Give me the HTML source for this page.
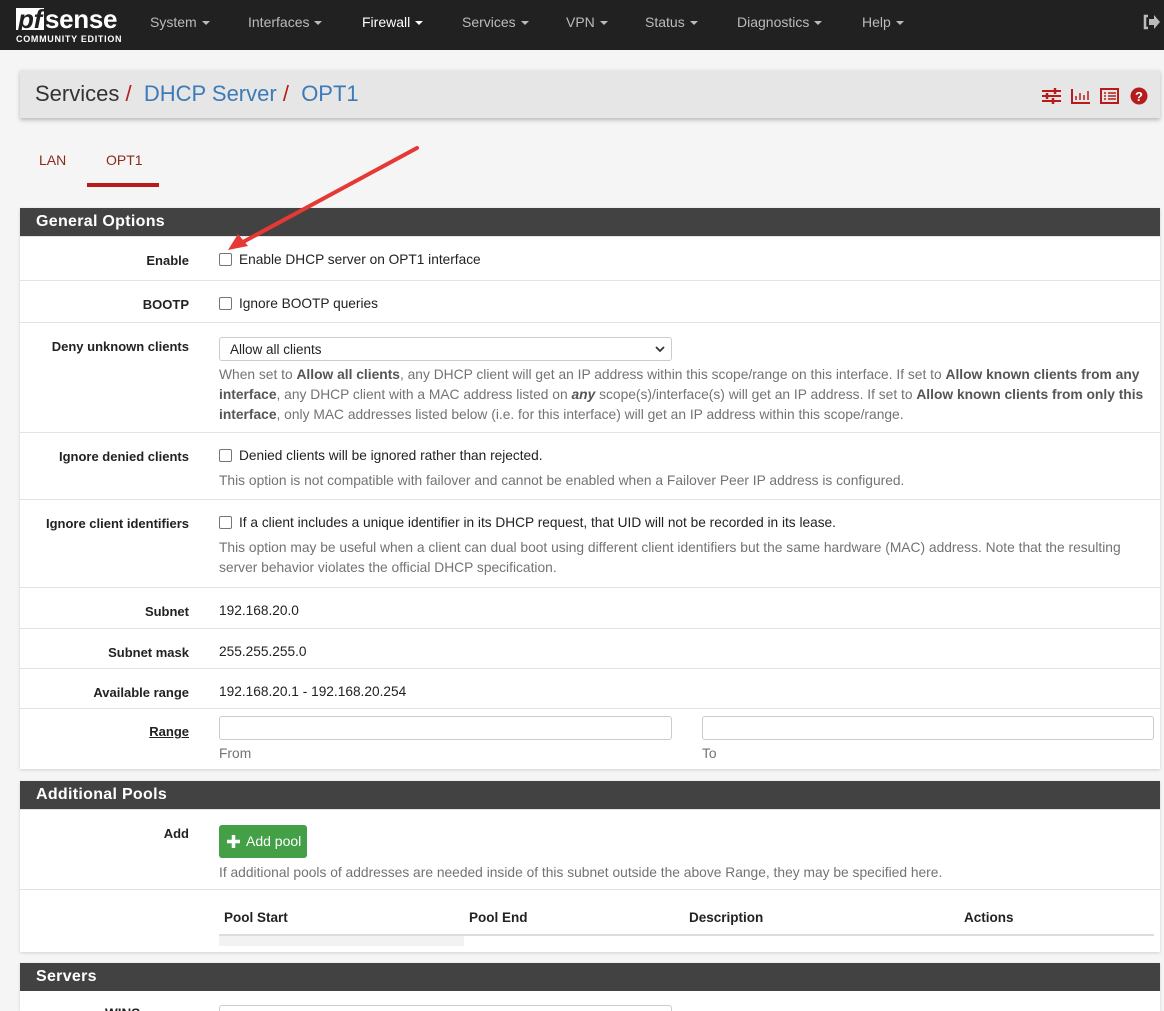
<!DOCTYPE html>
<html style="overflow:hidden;height:1011px"><head><meta charset="utf-8"><style>
*{box-sizing:border-box;margin:0;padding:0}
body{width:1164px;height:1011px;overflow:hidden;background:#f5f5f5;font-family:"Liberation Sans",sans-serif;font-size:13.5px;color:#222;position:relative}
.nav{position:absolute;left:0;top:0;width:1164px;height:50px;background:#212121}
.nav .item{position:absolute;top:14px;color:#bbb;font-size:14px}
.nav .item.act{color:#fff}
.car{display:inline-block;width:0;height:0;border-left:4px solid transparent;border-right:4px solid transparent;border-top:4px solid currentColor;vertical-align:middle;margin-left:5px}
.logo{position:absolute;left:16px;top:6px;color:#fff}
.logo .big{font-size:26px;font-weight:bold;letter-spacing:-0.3px;line-height:26px}
.logo .pf{display:inline-block;background:#fff;color:#212121;font-style:italic;padding:0 2px;line-height:22px;margin-right:1px}
.logo .ce{font-size:9px;font-weight:bold;letter-spacing:0.7px;margin-top:2px}
.bc{position:absolute;left:20px;top:70px;width:1140px;height:48px;background:#e6e6e6;box-shadow:0 2px 4px rgba(0,0,0,.25)}
.bc .t{position:absolute;left:15px;top:11px;font-size:22px;color:#333}
.bc .t a{color:#3c7ab8}
.bc .t s{text-decoration:none;color:#b71c1c}
.tab{position:absolute;top:152px;font-size:14px;color:#8a2b1c}
.panel{position:absolute;left:20px;width:1140px;background:#fff;box-shadow:0 1px 3px rgba(0,0,0,.15)}
.ph{height:28px;background:#424242;color:#fff;font-weight:bold;font-size:16px;padding:5px 16px;letter-spacing:.3px}
.row{position:relative;border-top:1px solid #e3e3e3}
.row:first-of-type{border-top:none}
.lbl{position:absolute;right:971px;top:16px;font-weight:bold;font-size:13px;white-space:nowrap}
.c{position:absolute;left:199px;top:15px;white-space:nowrap;font-size:13.7px}
.cb{display:inline-block;width:13px;height:13px;border:1px solid #767676;border-radius:2px;vertical-align:-2px;margin-right:7px;background:#fff}
.help{color:#737373;font-size:13.8px;line-height:20px;white-space:nowrap}
.help b{color:#555}
.inp{position:absolute;height:24px;border:1px solid #ccc;border-radius:3px;background:#fff}
</style></head><body>
<div class="nav">
 <div class="logo"><div class="big"><span class="pf">pf</span>sense</div><div class="ce">COMMUNITY EDITION</div></div>
 <div class="item" style="left:150px">System<span class="car"></span></div>
 <div class="item" style="left:248px">Interfaces<span class="car"></span></div>
 <div class="item act" style="left:362px">Firewall<span class="car"></span></div>
 <div class="item" style="left:462px">Services<span class="car"></span></div>
 <div class="item" style="left:566px">VPN<span class="car"></span></div>
 <div class="item" style="left:645px">Status<span class="car"></span></div>
 <div class="item" style="left:737px">Diagnostics<span class="car"></span></div>
 <div class="item" style="left:862px">Help<span class="car"></span></div>
 <svg style="position:absolute;left:1142px;top:14px" width="18" height="16" viewBox="0 0 18 16"><path d="M6 2H3v12h3" fill="none" stroke="#bbb" stroke-width="2.5"/><path d="M7 5h5V1l6 7-6 7v-4H7z" fill="#bbb"/></svg>
</div>
<div class="bc"><div class="t">Services <s>/</s>&nbsp; <a>DHCP Server</a> <s>/</s>&nbsp; <a>OPT1</a></div>
 <svg style="position:absolute;left:1022px;top:17px" width="106" height="18" viewBox="0 0 106 18">
  <g stroke="#b71c1c" stroke-width="2" fill="none"><path d="M0 4h19M0 9h19M0 14h19"/><path d="M13 1v6M5 6v6M11 11v6" stroke-width="2.5"/>
  <path d="M30 2v14h18"/><path d="M34 13v-4M38 13v-7M42 13v-5M46 13v-9" stroke-width="1.5"/>
  <rect x="59" y="2" width="17" height="14"/><path d="M62 6h2M66 6h8M62 9h2M66 9h8M62 12h2M66 12h8" stroke-width="1.5"/></g>
  <circle cx="97" cy="9" r="8.5" fill="#b71c1c"/><text x="97" y="14" fill="#fff" font-size="13" font-weight="bold" text-anchor="middle" font-family="Liberation Sans">?</text>
 </svg>
</div>
<div class="tab" style="left:39px">LAN</div>
<div class="tab" style="left:106px">OPT1</div>
<div style="position:absolute;left:87px;top:183px;width:72px;height:4px;background:#b71c1c"></div>

<div class="panel" style="top:208px;height:561px">
 <div class="ph">General Options</div>
 <div class="row" style="height:44px"><div class="lbl">Enable</div><div class="c"><span class="cb"></span>Enable DHCP server on OPT1 interface</div></div>
 <div class="row" style="height:42px"><div class="lbl">BOOTP</div><div class="c"><span class="cb"></span>Ignore BOOTP queries</div></div>
 <div class="row" style="height:110px"><div class="lbl">Deny unknown clients</div>
  <div class="inp" style="left:199px;top:14px;width:453px;padding:4px 10px">Allow all clients<svg style="position:absolute;right:6px;top:8px" width="10" height="7"><path d="M1 1l4 4 4-4" stroke="#333" stroke-width="1.8" fill="none"/></svg></div>
  <div class="c help" style="top:42px">When set to <b>Allow all clients</b>, any DHCP client will get an IP address within this scope/range on this interface. If set to <b>Allow known clients from any</b><br><b>interface</b>, any DHCP client with a MAC address listed on <b><i>any</i></b> scope(s)/interface(s) will get an IP address. If set to <b>Allow known clients from only this</b><br><b>interface</b>, only MAC addresses listed below (i.e. for this interface) will get an IP address within this scope/range.</div></div>
 <div class="row" style="height:67px"><div class="lbl">Ignore denied clients</div><div class="c"><span class="cb"></span>Denied clients will be ignored rather than rejected.</div>
  <div class="c help" style="top:38px">This option is not compatible with failover and cannot be enabled when a Failover Peer IP address is configured.</div></div>
 <div class="row" style="height:88px"><div class="lbl">Ignore client identifiers</div><div class="c"><span class="cb"></span>If a client includes a unique identifier in its DHCP request, that UID will not be recorded in its lease.</div>
  <div class="c help" style="top:38px">This option may be useful when a client can dual boot using different client identifiers but the same hardware (MAC) address. Note that the resulting<br>server behavior violates the official DHCP specification.</div></div>
 <div class="row" style="height:41px"><div class="lbl">Subnet</div><div class="c">192.168.20.0</div></div>
 <div class="row" style="height:40px"><div class="lbl">Subnet mask</div><div class="c">255.255.255.0</div></div>
 <div class="row" style="height:40px"><div class="lbl">Available range</div><div class="c">192.168.20.1 - 192.168.20.254</div></div>
 <div class="row" style="height:61px"><div class="lbl" style="text-decoration:underline;top:15px">Range</div>
  <div class="inp" style="left:199px;top:7px;width:453px"></div><div class="inp" style="left:682px;top:7px;width:452px"></div>
  <div class="c help" style="top:35px">From</div><div class="c help" style="top:35px;left:682px">To</div></div>
</div>

<div class="panel" style="top:781px;height:171px">
 <div class="ph">Additional Pools</div>
 <div class="row" style="height:80px"><div class="lbl">Add</div>
  <div style="position:absolute;left:199px;top:15px;width:88px;height:33px;background:#43a047;border-radius:3px;color:#fff;font-size:14px;padding:8px 0 0 27px">Add pool<svg style="position:absolute;left:7px;top:9px" width="15" height="15"><path d="M7.5 1v13M1 7.5h13" stroke="#fff" stroke-width="3.5"/></svg></div>
  <div class="c help" style="top:53px">If additional pools of addresses are needed inside of this subnet outside the above Range, they may be specified here.</div></div>
 <div class="row" style="height:63px">
  <div style="position:absolute;left:204px;top:20px;font-weight:bold">Pool Start</div>
  <div style="position:absolute;left:449px;top:20px;font-weight:bold">Pool End</div>
  <div style="position:absolute;left:669px;top:20px;font-weight:bold">Description</div>
  <div style="position:absolute;left:944px;top:20px;font-weight:bold">Actions</div>
  <div style="position:absolute;left:199px;top:44px;width:935px;height:2px;background:#ddd"></div>
  <div style="position:absolute;left:199px;top:46px;width:245px;height:10px;background:#f2f2f2"></div>
 </div>
</div>

<div class="panel" style="top:963px;height:48px;overflow:hidden">
 <div class="ph">Servers</div>
 <div class="inp" style="left:199px;top:42px;width:453px"></div>
 <div style="position:absolute;left:85px;top:43px;font-weight:bold">WINS</div>
</div>

<svg style="position:absolute;left:0;top:0" width="1164" height="1011">
 <path d="M417 148L243 242" stroke="#e53935" stroke-width="4" stroke-linecap="round"/>
 <path d="M228 250l10-16 10 12z" fill="#e53935"/>
</svg>
</body></html>
